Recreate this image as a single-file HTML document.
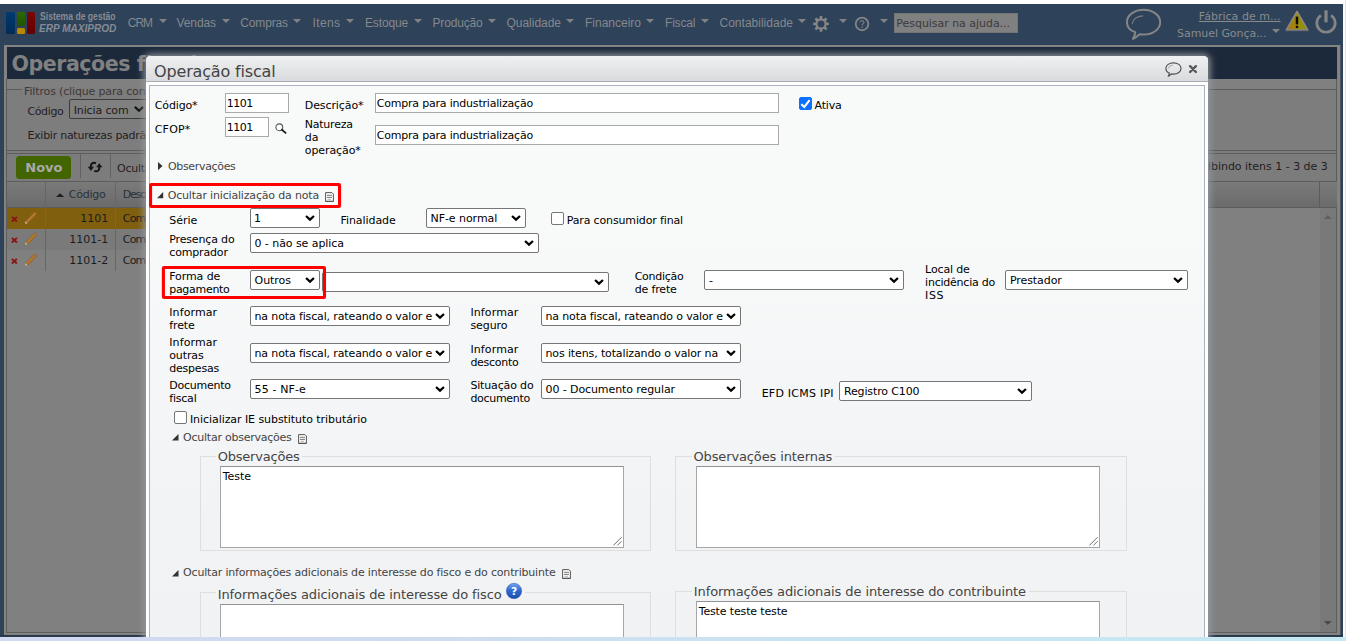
<!DOCTYPE html>
<html lang="pt-BR"><head><meta charset="utf-8"><title>Operações fiscais</title>
<style>

html,body{margin:0;padding:0}
body{width:1346px;height:641px;overflow:hidden;background:#fff;position:relative;font-family:"DejaVu Sans","Liberation Sans",sans-serif;font-size:11px}
.a,.t{position:absolute}
.t{white-space:nowrap}
div.a{box-sizing:border-box}
svg.a{overflow:visible}
.arr{position:absolute;width:0;height:0;border-left:4px solid transparent;border-right:4px solid transparent;border-top:4.5px solid #828282}
.sel{position:absolute;box-sizing:border-box;background:#fff;border:1px solid #767676;border-radius:2px}
.inp{position:absolute;box-sizing:border-box;background:#fff;border:1px solid #a9a9a9}
.ta{position:absolute;box-sizing:border-box;background:#fff;border:1px solid #a6a6a6;border-top-color:#929292}
.fs{position:absolute;box-sizing:border-box;border:1px solid #dddedf}
.cb{position:absolute;box-sizing:border-box;background:#fff;border:1px solid #767676;border-radius:2px}
.red{position:absolute;box-sizing:border-box;border:2.4px solid #fd0303}

</style></head>
<body>
<div class="a" style="left:0;top:4px;width:1343px;height:633px;background:#2e425a"></div>
<div class="a" style="left:1343px;top:0;width:3px;height:637px;background:#fbfbfb;border-left:0"></div>
<div class="a" style="left:1344.6px;top:0;width:1px;height:637px;background:#e4e4e4"></div>
<div class="a" style="left:6px;top:12px;width:8.5px;height:21.5px;border-radius:1.5px;background:linear-gradient(#003a70,#002c55)"></div>
<div class="a" style="left:16.5px;top:12px;width:8.5px;height:14px;border-radius:1.5px;background:linear-gradient(#2a6a00,#1f5400)"></div>
<div class="a" style="left:16.5px;top:27.6px;width:8.5px;height:6px;border-radius:1.5px;background:#b98a00"></div>
<div class="a" style="left:26.8px;top:12px;width:8.3px;height:21.5px;border-radius:1.5px;background:linear-gradient(#7c0505,#640000)"></div>
<span id="t0" class="t" style='left:39.70px;top:11px;font-size:10px;line-height:11px;color:#858b93;font-family:"Liberation Sans","DejaVu Sans",sans-serif;font-weight:700;transform-origin:0 50%;transform:scaleX(0.8609);'>Sistema de gestão</span>
<span id="t1" class="t" style='left:39.10px;top:23px;font-size:10.2px;line-height:11px;color:#858b93;font-family:"Liberation Sans","DejaVu Sans",sans-serif;font-weight:700;font-style:italic;transform-origin:0 50%;transform:scaleX(0.9883);'>ERP MAXIPROD</span>
<span id="t2" class="t" style='left:127.80px;top:16px;font-size:12px;line-height:14px;color:#85888c;font-family:"Liberation Sans","DejaVu Sans",sans-serif;letter-spacing:-1.043px;'>CRM</span>
<div class="arr" style="left:158.7px;top:19px"></div>
<span id="t3" class="t" style='left:176.50px;top:16px;font-size:12px;line-height:14px;color:#85888c;font-family:"Liberation Sans","DejaVu Sans",sans-serif;letter-spacing:-0.091px;'>Vendas</span>
<div class="arr" style="left:221.7px;top:19px"></div>
<span id="t4" class="t" style='left:240.20px;top:16px;font-size:12px;line-height:14px;color:#85888c;font-family:"Liberation Sans","DejaVu Sans",sans-serif;letter-spacing:-0.127px;'>Compras</span>
<div class="arr" style="left:293px;top:19px"></div>
<span id="t5" class="t" style='left:312.50px;top:16px;font-size:12px;line-height:14px;color:#85888c;font-family:"Liberation Sans","DejaVu Sans",sans-serif;letter-spacing:0.397px;'>Itens</span>
<div class="arr" style="left:346px;top:19px"></div>
<span id="t6" class="t" style='left:365.00px;top:16px;font-size:12px;line-height:14px;color:#85888c;font-family:"Liberation Sans","DejaVu Sans",sans-serif;letter-spacing:-0.150px;'>Estoque</span>
<div class="arr" style="left:413.7px;top:19px"></div>
<span id="t7" class="t" style='left:432.50px;top:16px;font-size:12px;line-height:14px;color:#85888c;font-family:"Liberation Sans","DejaVu Sans",sans-serif;letter-spacing:-0.172px;'>Produção</span>
<div class="arr" style="left:488px;top:19px"></div>
<span id="t8" class="t" style='left:506.50px;top:16px;font-size:12px;line-height:14px;color:#85888c;font-family:"Liberation Sans","DejaVu Sans",sans-serif;letter-spacing:-0.024px;'>Qualidade</span>
<div class="arr" style="left:566px;top:19px"></div>
<span id="t9" class="t" style='left:585.00px;top:16px;font-size:12px;line-height:14px;color:#85888c;font-family:"Liberation Sans","DejaVu Sans",sans-serif;'>Financeiro</span>
<div class="arr" style="left:646px;top:19px"></div>
<span id="t10" class="t" style='left:665.00px;top:16px;font-size:12px;line-height:14px;color:#85888c;font-family:"Liberation Sans","DejaVu Sans",sans-serif;letter-spacing:-0.191px;'>Fiscal</span>
<div class="arr" style="left:700.5px;top:19px"></div>
<span id="t11" class="t" style='left:719.50px;top:16px;font-size:12px;line-height:14px;color:#85888c;font-family:"Liberation Sans","DejaVu Sans",sans-serif;letter-spacing:0.008px;'>Contabilidade</span>
<div class="arr" style="left:798px;top:19px"></div>
<div class="arr" style="left:838.7px;top:19px"></div>
<div class="arr" style="left:880px;top:19px"></div>
<svg class="a" style="left:812px;top:15px" width="18" height="18" viewBox="0 0 18 18"><path d="M7.53 3.39 L7.80 0.99 L10.20 0.99 L10.47 3.39 L11.86 3.97 L13.75 2.46 L15.44 4.15 L13.93 6.04 L14.51 7.43 L16.91 7.70 L16.91 10.10 L14.51 10.37 L13.93 11.76 L15.44 13.65 L13.75 15.34 L11.86 13.83 L10.47 14.41 L10.20 16.81 L7.80 16.81 L7.53 14.41 L6.14 13.83 L4.25 15.34 L2.56 13.65 L4.07 11.76 L3.49 10.37 L1.09 10.10 L1.09 7.70 L3.49 7.43 L4.07 6.04 L2.56 4.15 L4.25 2.46 L6.14 3.97 Z" fill="#868686"/><circle cx="9" cy="8.9" r="3.5" fill="#2e425a"/></svg>
<svg class="a" style="left:854px;top:16px" width="16" height="16" viewBox="0 0 16 16"><circle cx="8.05" cy="7.95" r="6.3" fill="none" stroke="#848484" stroke-width="1.8"/><path d="M6.1 6.3 C6.1 4.2 10 4.2 10 6.3 C10 7.6 8.1 7.7 8.1 9.5" fill="none" stroke="#848484" stroke-width="1.1"/><circle cx="8.1" cy="11.3" r="0.75" fill="#848484"/></svg>
<svg class="a" style="left:1124px;top:6px" width="40" height="36" viewBox="0 0 40 36"><path d="M11.3 26.3 C5.5 24.3 2.9 20.5 2.9 16.2 C2.9 9.3 10.3 3.8 19.6 3.8 C28.9 3.8 36.2 9.3 36.2 16.2 C36.2 23 28.9 28.6 19.6 28.6 C18.2 28.6 16.9 28.5 15.6 28.2 C13.2 30.2 11 32 8.9 32.8 C10.2 30.9 11 28.7 11.3 26.3 Z" fill="none" stroke="#858585" stroke-width="2" stroke-linejoin="round"/><path d="M8.3 17.6 C8.6 13.3 13.2 10.2 18.6 9.9" fill="none" stroke="#7a7f86" stroke-width="1.1" stroke-linecap="round"/></svg>
<svg class="a" style="left:1284px;top:9px" width="27" height="24" viewBox="0 0 27 24"><defs><linearGradient id="wg" x1="0" x2="1" y1="0" y2="0"><stop offset="0.15" stop-color="#a97a12"/><stop offset="0.55" stop-color="#9d8d08"/><stop offset="1" stop-color="#8a900a"/></linearGradient></defs><path d="M13 2 L24.6 21.6 L1.6 21.6 Z" fill="#4a4f58" stroke="#4a4f58" stroke-width="1.6" stroke-linejoin="round"/><path d="M13 2.4 L23.7 20.8 L2.4 20.8 Z" fill="url(#wg)" stroke="#8c8c8c" stroke-width="1.3" stroke-linejoin="round"/><path d="M13 7.6 V15.4" stroke="#0a0a0a" stroke-width="2.5"/><rect x="11.8" y="16.8" width="2.4" height="2.3" fill="#0a0a0a"/></svg>
<svg class="a" style="left:1314px;top:9px" width="24" height="26" viewBox="0 0 24 26"><path d="M6.9 6.4 A9.2 9.2 0 1 0 17.1 6.4" fill="none" stroke="#858585" stroke-width="2.7"/><path d="M12 1.3 V13.4" stroke="#858585" stroke-width="3.2"/></svg>
<div class="a" style="left:893.8px;top:12.9px;width:124.3px;height:19.8px;background:#808080;border:1px solid #757575"></div>
<span id="t12" class="t" style='left:896.30px;top:17px;font-size:11px;line-height:13px;color:#3e3a3c;font-family:"DejaVu Sans","Liberation Sans",sans-serif;letter-spacing:-0.035px;'>Pesquisar na ajuda...</span>
<span id="t13" class="t" style='left:1198.80px;top:10px;font-size:11px;line-height:13px;color:#888a8c;font-family:"DejaVu Sans","Liberation Sans",sans-serif;letter-spacing:0.023px;text-decoration:underline;'>Fábrica de m...</span>
<span id="t14" class="t" style='left:1177.00px;top:27px;font-size:11px;line-height:13px;color:#888a8c;font-family:"DejaVu Sans","Liberation Sans",sans-serif;letter-spacing:-0.049px;'>Samuel Gonça...</span>
<div class="arr" style="left:1271.8px;top:28.8px"></div>
<div class="a" style="left:4px;top:44.5px;width:1336px;height:590.5px;background:#808080;border:2.5px solid #838383"></div>
<div class="a" style="left:1339.8px;top:44.5px;width:0.8px;height:591px;background:#4e5560"></div>
<div class="a" style="left:6.5px;top:47px;width:1330.5px;height:32px;background:#1c293a"></div>
<span id="t15" class="t" style='left:11.50px;top:52px;font-size:20.6px;line-height:24px;color:#808080;font-family:"DejaVu Sans","Liberation Sans",sans-serif;font-weight:700;letter-spacing:-0.495px;'>Operações</span>
<span id="t16" class="t" style='left:136.70px;top:52px;font-size:20.6px;line-height:24px;color:#808080;font-family:"DejaVu Sans","Liberation Sans",sans-serif;font-weight:700;letter-spacing:-0.165px;'>fiscais</span>
<div class="a" style="left:6px;top:79px;width:1331px;height:553.5px;border:1px solid #5e5e5e;border-top:0"></div>
<div class="a" style="left:0;top:635px;width:1343px;height:2px;background:linear-gradient(#26303c,#2e425a)"></div>
<div class="a" style="left:6px;top:89px;width:1331px;height:62px;border:1px solid #5b5b5b;background:#7d7d7d"></div>
<div class="a" style="left:22px;top:88px;width:130px;height:4px;background:#7e7e7e"></div>
<span id="t18" class="t" style='left:24.10px;top:85px;font-size:11px;line-height:13px;color:#3d3838;font-family:"DejaVu Sans","Liberation Sans",sans-serif;letter-spacing:-0.154px;'>Filtros (clique para con</span>
<span id="t19" class="t" style='left:145.30px;top:85px;font-size:11px;line-height:13px;color:#3d3838;font-family:"DejaVu Sans","Liberation Sans",sans-serif;'>figurar)</span>
<span id="t20" class="t" style='left:27.40px;top:105px;font-size:11px;line-height:13px;color:#241c22;font-family:"DejaVu Sans","Liberation Sans",sans-serif;letter-spacing:-0.345px;'>Código</span>
<div class="a" style="left:69px;top:99px;width:90px;height:20px;border:1px solid #3b3b3b;border-radius:2px;background:#808080"></div>
<span id="t21" class="t" style='left:73.70px;top:104px;font-size:11px;line-height:13px;color:#1e1a1a;font-family:"DejaVu Sans","Liberation Sans",sans-serif;letter-spacing:-0.131px;'>Inicia com</span>
<svg class="a" style="left:134.4px;top:106.4px" width="10" height="6.5" viewBox="0 0 10 6.5"><path d="M0.9 0.9 L5 4.7 L9.1 0.9" fill="none" stroke="#111" stroke-width="2.2"/></svg>
<span id="t22" class="t" style='left:27.40px;top:129px;font-size:11px;line-height:13px;color:#241c22;font-family:"DejaVu Sans","Liberation Sans",sans-serif;letter-spacing:-0.257px;'>Exibir naturezas padrã</span>
<span id="t23" class="t" style='left:146.10px;top:129px;font-size:11px;line-height:13px;color:#241c22;font-family:"DejaVu Sans","Liberation Sans",sans-serif;'>o</span>
<div class="a" style="left:7px;top:151px;width:1329px;height:2px;background:#7c7c7c"></div>
<div class="a" style="left:6px;top:153px;width:1331px;height:29px;border:1px solid #5d5d5d;background:#7c7c7c"></div>
<div class="a" style="left:16px;top:156px;width:55.2px;height:23.2px;border-radius:3.5px;background:#436501"></div>
<span id="t24" class="t" style='left:25.30px;top:160px;font-size:13px;line-height:15px;color:#a9a9a9;font-family:"DejaVu Sans","Liberation Sans",sans-serif;font-weight:700;letter-spacing:-0.030px;'>Novo</span>
<div class="a" style="left:80px;top:154px;width:1px;height:24px;background:#626262"></div>
<div class="a" style="left:110px;top:154px;width:1px;height:24px;background:#626262"></div>
<svg class="a" style="left:87px;top:161px" width="16" height="12" viewBox="87 161 16 12"><path d="M96 163.2 C92.6 162 90.9 163.9 90.9 166 V167.6" fill="none" stroke="#151515" stroke-width="2"/><path d="M87.8 166.8 H94 L90.9 170.9 Z" fill="#151515"/><path d="M94.2 170.9 C97.6 172.1 99.3 170.2 99.3 168 V166.6" fill="none" stroke="#151515" stroke-width="2"/><path d="M96.2 167.3 H102.4 L99.3 163.2 Z" fill="#151515"/></svg>
<span id="t25" class="t" style='left:117.10px;top:162px;font-size:11px;line-height:13px;color:#241c22;font-family:"DejaVu Sans","Liberation Sans",sans-serif;letter-spacing:-0.249px;'>Ocult</span>
<span id="t26" class="t" style='left:144.70px;top:162px;font-size:11px;line-height:13px;color:#241c22;font-family:"DejaVu Sans","Liberation Sans",sans-serif;'>ar filtros</span>
<span id="t27" class="t" style='left:1195.00px;top:160px;font-size:11px;line-height:13px;color:#241c1c;font-family:"DejaVu Sans","Liberation Sans",sans-serif;'>Ex</span>
<span id="t28" class="t" style='left:1207.90px;top:160px;font-size:11px;line-height:13px;color:#241c1c;font-family:"DejaVu Sans","Liberation Sans",sans-serif;letter-spacing:-0.018px;'>ibindo itens 1 - 3 de 3</span>
<div class="a" style="left:7px;top:182px;width:1329.5px;height:25.6px;background:linear-gradient(#7a7a7a,#6b6b6b);border-bottom:1px solid #5c5c5c"></div>
<div class="a" style="left:7px;top:207.6px;width:900px;height:21.2px;background:#80600f"></div>
<div class="a" style="left:7px;top:228.8px;width:900px;height:21.1px;background:#7a7a7a"></div>
<div class="a" style="left:1319.6px;top:207.6px;width:16.6px;height:424.3px;background:#797979"></div>
<div class="a" style="left:1319.3px;top:182px;width:1px;height:25.5px;background:#5c5c5c"></div>
<svg class="a" style="left:1323.8px;top:215px" width="7.6" height="4" viewBox="0 0 7.6 4"><path d="M0 4 L3.8 0 L7.6 4 Z" fill="#5f5f5f"/></svg>
<svg class="a" style="left:1323.8px;top:621px" width="7.6" height="4" viewBox="0 0 7.6 4"><path d="M0 0 L3.8 4 L7.6 0 Z" fill="#4a4a4a"/></svg>
<div class="a" style="left:45.2px;top:182px;width:1px;height:89.4px;background:#666"></div>
<div class="a" style="left:115.2px;top:182px;width:1px;height:89.4px;background:#666"></div>
<svg class="a" style="left:55.9px;top:192.9px" width="8.2" height="4.1" viewBox="0 0 8.2 3.8"><path d="M0 3.8 L4.1 0 L8.2 3.8 Z" fill="#1f1f1f"/></svg>
<span id="t29" class="t" style='left:68.70px;top:188px;font-size:11px;line-height:13px;color:#27313d;font-family:"DejaVu Sans","Liberation Sans",sans-serif;letter-spacing:-0.229px;'>Código</span>
<span id="t30" class="t" style='left:122.80px;top:188px;font-size:11px;line-height:13px;color:#27313d;font-family:"DejaVu Sans","Liberation Sans",sans-serif;letter-spacing:-1.283px;'>Desc</span>
<span id="t31" class="t" style='left:144.50px;top:188px;font-size:11px;line-height:13px;color:#27313d;font-family:"DejaVu Sans","Liberation Sans",sans-serif;'>rição</span>
<span id="t32" class="t" style='left:-0.50px;top:212px;font-size:11px;line-height:13px;color:#1c1c1c;font-family:"DejaVu Sans","Liberation Sans",sans-serif;left:auto;right:1237.7px;'>1101</span>
<span id="t33" class="t" style='left:122.80px;top:212px;font-size:11px;line-height:13px;color:#1c1c1c;font-family:"DejaVu Sans","Liberation Sans",sans-serif;letter-spacing:-0.814px;'>Com</span>
<span id="t34" class="t" style='left:145.50px;top:212px;font-size:11px;line-height:13px;color:#1c1c1c;font-family:"DejaVu Sans","Liberation Sans",sans-serif;'>pra para industrialização</span>
<svg class="a" style="left:10.5px;top:215.8px" width="6.8" height="6.4" viewBox="0 0 6.8 6.4"><path d="M0.9 0.9 L5.9 5.5 M5.9 0.9 L0.9 5.5" stroke="#8a1414" stroke-width="1.9"/></svg>
<svg class="a" style="left:23.6px;top:211.0px" width="13.6" height="13.2" viewBox="0 0 13.6 13.2"><path d="M1.6 10.2 L10.6 0.8 L12.9 3 L3.8 12.3 Z" fill="#a86f2c" stroke="#8a5a22" stroke-width="0.5"/><path d="M1.6 10.2 L3.8 12.3 L0.4 13 Z" fill="#c9b48a"/><path d="M0.4 13 L1.3 12.8 L0.7 12.2 Z" fill="#222"/><path d="M3 10.6 L11.4 2" stroke="#c48a3f" stroke-width="0.8"/></svg>
<span id="t35" class="t" style='left:-0.50px;top:233px;font-size:11px;line-height:13px;color:#1c1c1c;font-family:"DejaVu Sans","Liberation Sans",sans-serif;left:auto;right:1237.7px;'>1101-1</span>
<span id="t36" class="t" style='left:122.80px;top:233px;font-size:11px;line-height:13px;color:#1c1c1c;font-family:"DejaVu Sans","Liberation Sans",sans-serif;letter-spacing:-0.814px;'>Com</span>
<span id="t37" class="t" style='left:145.50px;top:233px;font-size:11px;line-height:13px;color:#1c1c1c;font-family:"DejaVu Sans","Liberation Sans",sans-serif;'>pra para industrialização</span>
<svg class="a" style="left:10.5px;top:237.0px" width="6.8" height="6.4" viewBox="0 0 6.8 6.4"><path d="M0.9 0.9 L5.9 5.5 M5.9 0.9 L0.9 5.5" stroke="#8a1414" stroke-width="1.9"/></svg>
<svg class="a" style="left:23.6px;top:232.2px" width="13.6" height="13.2" viewBox="0 0 13.6 13.2"><path d="M1.6 10.2 L10.6 0.8 L12.9 3 L3.8 12.3 Z" fill="#a86f2c" stroke="#8a5a22" stroke-width="0.5"/><path d="M1.6 10.2 L3.8 12.3 L0.4 13 Z" fill="#c9b48a"/><path d="M0.4 13 L1.3 12.8 L0.7 12.2 Z" fill="#222"/><path d="M3 10.6 L11.4 2" stroke="#c48a3f" stroke-width="0.8"/></svg>
<span id="t38" class="t" style='left:-0.50px;top:254px;font-size:11px;line-height:13px;color:#1c1c1c;font-family:"DejaVu Sans","Liberation Sans",sans-serif;left:auto;right:1237.7px;'>1101-2</span>
<span id="t39" class="t" style='left:122.80px;top:254px;font-size:11px;line-height:13px;color:#1c1c1c;font-family:"DejaVu Sans","Liberation Sans",sans-serif;letter-spacing:-0.814px;'>Com</span>
<span id="t40" class="t" style='left:145.50px;top:254px;font-size:11px;line-height:13px;color:#1c1c1c;font-family:"DejaVu Sans","Liberation Sans",sans-serif;'>pra para industrialização</span>
<svg class="a" style="left:10.5px;top:258.2px" width="6.8" height="6.4" viewBox="0 0 6.8 6.4"><path d="M0.9 0.9 L5.9 5.5 M5.9 0.9 L0.9 5.5" stroke="#8a1414" stroke-width="1.9"/></svg>
<svg class="a" style="left:23.6px;top:253.4px" width="13.6" height="13.2" viewBox="0 0 13.6 13.2"><path d="M1.6 10.2 L10.6 0.8 L12.9 3 L3.8 12.3 Z" fill="#a86f2c" stroke="#8a5a22" stroke-width="0.5"/><path d="M1.6 10.2 L3.8 12.3 L0.4 13 Z" fill="#c9b48a"/><path d="M0.4 13 L1.3 12.8 L0.7 12.2 Z" fill="#222"/><path d="M3 10.6 L11.4 2" stroke="#c48a3f" stroke-width="0.8"/></svg>
<div class="a" style="left:146px;top:56px;width:1062px;height:600px;background:#fff;border-radius:4.5px 4.5px 0 0;box-shadow:0 0 7px 2px rgba(150,155,160,.95)"></div>
<div class="a" style="left:146px;top:56px;width:1062px;height:25.6px;border-radius:4.5px 4.5px 0 0;background:linear-gradient(#eff0f1,#d9dbde);border-bottom:1px solid #a9aeb6"></div>
<span id="t17" class="t" style='left:154.10px;top:62px;font-size:16px;line-height:19px;color:#444;font-family:"DejaVu Sans","Liberation Sans",sans-serif;letter-spacing:-0.168px;'>Operação fiscal</span>
<div class="a" style="left:149px;top:85px;width:1056px;height:600px;border:1px solid #a9b2bf;background:linear-gradient(#f8fafa 0,#f8fafa 130px,#f2f3f5 420px,#f1f2f4 600px)"></div>
<svg class="a" style="left:1163.6px;top:60.6px" width="19" height="17" viewBox="0 0 19 17"><path d="M5.4 12.1 C2.9 11.1 1.9 9.3 1.9 7.4 C1.9 4.2 5.3 1.8 9.5 1.8 C13.7 1.8 17 4.2 17 7.4 C17 10.6 13.7 13.1 9.5 13.1 C8.8 13.1 8.1 13 7.4 12.9 C6.3 14 5.3 14.9 4.2 15.3 C4.9 14.3 5.3 13.2 5.4 12.1 Z" fill="none" stroke="#505050" stroke-width="1.15" stroke-linejoin="round"/><path d="M4.3 7.5 C4.5 5.6 6.6 4.4 8.8 4.2" fill="none" stroke="#8a8a8a" stroke-width="0.7"/></svg>
<svg class="a" style="left:1188px;top:64px" width="10" height="10" viewBox="0 0 10 10"><path d="M2.1 2.2 L7.9 8 M7.9 2.2 L2.1 8" stroke="#585858" stroke-width="2.4" stroke-linecap="round"/></svg>
<span id="t41" class="t" style='left:154.75px;top:99px;font-size:11px;line-height:13px;color:#000;font-family:"DejaVu Sans","Liberation Sans",sans-serif;letter-spacing:-0.132px;'>Código*</span>
<div class="inp" style="left:225px;top:93px;width:64px;height:20px"></div>
<span id="t42" class="t" style='left:226.70px;top:97px;font-size:11px;line-height:13px;color:#000;font-family:"DejaVu Sans","Liberation Sans",sans-serif;letter-spacing:-0.475px;'>1101</span>
<span id="t43" class="t" style='left:304.75px;top:99px;font-size:11px;line-height:13px;color:#000;font-family:"DejaVu Sans","Liberation Sans",sans-serif;letter-spacing:-0.087px;'>Descrição*</span>
<div class="inp" style="left:375px;top:93px;width:404px;height:20px"></div>
<span id="t44" class="t" style='left:376.70px;top:97px;font-size:11px;line-height:13px;color:#000;font-family:"DejaVu Sans","Liberation Sans",sans-serif;letter-spacing:-0.198px;'>Compra para industrialização</span>
<div class="cb" style="left:799px;top:97px;width:13px;height:13px;background:#0b70fd;border-color:#0b70fd"></div><svg class="a" style="left:799px;top:97px" width="13" height="13" viewBox="0 0 13 13"><path d="M2.3 7.3 L5.3 10 L10.6 3.2" fill="none" stroke="#fff" stroke-width="2.1"/></svg>
<span id="t45" class="t" style='left:814.50px;top:99px;font-size:11px;line-height:13px;color:#000;font-family:"DejaVu Sans","Liberation Sans",sans-serif;letter-spacing:-0.191px;'>Ativa</span>
<span id="t46" class="t" style='left:154.75px;top:123px;font-size:11px;line-height:13px;color:#000;font-family:"DejaVu Sans","Liberation Sans",sans-serif;letter-spacing:0.188px;'>CFOP*</span>
<div class="inp" style="left:225px;top:117px;width:44px;height:20px"></div>
<span id="t47" class="t" style='left:226.70px;top:121px;font-size:11px;line-height:13px;color:#000;font-family:"DejaVu Sans","Liberation Sans",sans-serif;letter-spacing:-0.475px;'>1101</span>
<svg class="a" style="left:274.5px;top:122.5px" width="12" height="11" viewBox="0 0 12 11"><circle cx="4.3" cy="4.3" r="3.4" fill="#fff" stroke="#555" stroke-width="1.1"/><path d="M6.9 6.7 L10.6 9.9" stroke="#222" stroke-width="1.9" stroke-linecap="round"/></svg>
<span id="t48" class="t" style='left:304.75px;top:118px;font-size:11px;line-height:13px;color:#000;font-family:"DejaVu Sans","Liberation Sans",sans-serif;letter-spacing:-0.229px;'>Natureza</span>
<span id="t49" class="t" style='left:304.75px;top:131px;font-size:11px;line-height:13px;color:#000;font-family:"DejaVu Sans","Liberation Sans",sans-serif;'>da</span>
<span id="t50" class="t" style='left:304.75px;top:144px;font-size:11px;line-height:13px;color:#000;font-family:"DejaVu Sans","Liberation Sans",sans-serif;letter-spacing:-0.085px;'>operação*</span>
<div class="inp" style="left:375px;top:125px;width:404px;height:20px"></div>
<span id="t51" class="t" style='left:376.70px;top:129px;font-size:11px;line-height:13px;color:#000;font-family:"DejaVu Sans","Liberation Sans",sans-serif;letter-spacing:-0.198px;'>Compra para industrialização</span>
<svg class="a" style="left:158px;top:161.9px" width="4.5" height="8.2" viewBox="0 0 4.5 8.2"><path d="M0 0 L4.5 4.1 L0 8.2 Z" fill="#333"/></svg>
<span id="t52" class="t" style='left:168.00px;top:160px;font-size:11px;line-height:13px;color:#444;font-family:"DejaVu Sans","Liberation Sans",sans-serif;letter-spacing:-0.337px;'>Observações</span>
<svg class="a" style="left:157px;top:192px" width="6.2" height="6.2" viewBox="0 0 6 6"><path d="M6 0 L6 6 L0 6 Z" fill="#333"/></svg>
<span id="t53" class="t" style='left:167.70px;top:189px;font-size:11px;line-height:13px;color:#444;font-family:"DejaVu Sans","Liberation Sans",sans-serif;letter-spacing:-0.174px;'>Ocultar inicialização da nota</span>
<svg class="a" style="left:325px;top:192px" width="9" height="10" viewBox="0 0 9 10"><path d="M0.6 0.6 H6.9 L8.4 2.1 V9.3 H0.6 Z" fill="#fbfbfb" stroke="#555" stroke-width="1"/><path d="M0.4 9.4 H8.6" stroke="#444" stroke-width="0.7"/><path d="M2 3.3 H7" stroke="#6a6a6a" stroke-width="0.9"/><path d="M2 5.4 H7" stroke="#6a6a6a" stroke-width="0.9"/><path d="M2.6 7.3 H6" stroke="#a5a5a5" stroke-width="0.8"/></svg>
<span id="t54" class="t" style='left:169.25px;top:214px;font-size:11px;line-height:13px;color:#000;font-family:"DejaVu Sans","Liberation Sans",sans-serif;letter-spacing:-0.022px;'>Série</span>
<div class="sel" style="left:250px;top:208px;width:70px;height:20px"><svg class="a" style="right:0;top:0" width="20" height="18" viewBox="0 0 20 18"><path d="M7.04 7.04 L11 10.64 L14.96 7.04" fill="none" stroke="#000" stroke-width="2.25"/></svg></div>
<span id="t55" class="t" style='left:253.90px;top:212px;font-size:11px;line-height:13px;color:#000;font-family:"DejaVu Sans","Liberation Sans",sans-serif;'>1</span>
<span id="t56" class="t" style='left:340.50px;top:214px;font-size:11px;line-height:13px;color:#000;font-family:"DejaVu Sans","Liberation Sans",sans-serif;letter-spacing:-0.064px;'>Finalidade</span>
<div class="sel" style="left:426px;top:208px;width:100px;height:20px"><svg class="a" style="right:0;top:0" width="20" height="18" viewBox="0 0 20 18"><path d="M7.04 7.04 L11 10.64 L14.96 7.04" fill="none" stroke="#000" stroke-width="2.25"/></svg></div>
<span id="t57" class="t" style='left:430.50px;top:212px;font-size:11px;line-height:13px;color:#000;font-family:"DejaVu Sans","Liberation Sans",sans-serif;letter-spacing:-0.054px;'>NF-e normal</span>
<div class="cb" style="left:551px;top:212px;width:13px;height:13px"></div>
<span id="t58" class="t" style='left:566.70px;top:214px;font-size:11px;line-height:13px;color:#000;font-family:"DejaVu Sans","Liberation Sans",sans-serif;letter-spacing:-0.143px;'>Para consumidor final</span>
<span id="t59" class="t" style='left:169.25px;top:233px;font-size:11px;line-height:13px;color:#000;font-family:"DejaVu Sans","Liberation Sans",sans-serif;letter-spacing:-0.156px;'>Presença do</span>
<span id="t60" class="t" style='left:169.25px;top:246px;font-size:11px;line-height:13px;color:#000;font-family:"DejaVu Sans","Liberation Sans",sans-serif;letter-spacing:-0.165px;'>comprador</span>
<div class="sel" style="left:250px;top:233px;width:289px;height:20px"><svg class="a" style="right:0;top:0" width="20" height="18" viewBox="0 0 20 18"><path d="M7.04 7.04 L11 10.64 L14.96 7.04" fill="none" stroke="#000" stroke-width="2.25"/></svg></div>
<span id="t61" class="t" style='left:254.50px;top:237px;font-size:11px;line-height:13px;color:#000;font-family:"DejaVu Sans","Liberation Sans",sans-serif;letter-spacing:-0.061px;'>0 - não se aplica</span>
<span id="t62" class="t" style='left:169.25px;top:270px;font-size:11px;line-height:13px;color:#000;font-family:"DejaVu Sans","Liberation Sans",sans-serif;letter-spacing:-0.088px;'>Forma de</span>
<span id="t63" class="t" style='left:169.25px;top:283px;font-size:11px;line-height:13px;color:#000;font-family:"DejaVu Sans","Liberation Sans",sans-serif;letter-spacing:-0.300px;'>pagamento</span>
<div class="sel" style="left:322px;top:272px;width:287px;height:20px"><svg class="a" style="right:0;top:0" width="20" height="18" viewBox="0 0 20 18"><path d="M7.04 7.04 L11 10.64 L14.96 7.04" fill="none" stroke="#000" stroke-width="2.25"/></svg></div>
<div class="sel" style="left:250px;top:270px;width:70px;height:20px"><svg class="a" style="right:0;top:0" width="20" height="18" viewBox="0 0 20 18"><path d="M7.04 7.04 L11 10.64 L14.96 7.04" fill="none" stroke="#000" stroke-width="2.25"/></svg></div>
<span id="t64" class="t" style='left:254.50px;top:274px;font-size:11px;line-height:13px;color:#000;font-family:"DejaVu Sans","Liberation Sans",sans-serif;letter-spacing:-0.031px;'>Outros</span>
<span id="t65" class="t" style='left:634.70px;top:270px;font-size:11px;line-height:13px;color:#000;font-family:"DejaVu Sans","Liberation Sans",sans-serif;letter-spacing:-0.269px;'>Condição</span>
<span id="t66" class="t" style='left:634.70px;top:283px;font-size:11px;line-height:13px;color:#000;font-family:"DejaVu Sans","Liberation Sans",sans-serif;letter-spacing:-0.150px;'>de frete</span>
<div class="sel" style="left:704px;top:270px;width:200px;height:20px"><svg class="a" style="right:0;top:0" width="20" height="18" viewBox="0 0 20 18"><path d="M7.04 7.04 L11 10.64 L14.96 7.04" fill="none" stroke="#000" stroke-width="2.25"/></svg></div>
<span id="t67" class="t" style='left:708.90px;top:274px;font-size:11px;line-height:13px;color:#000;font-family:"DejaVu Sans","Liberation Sans",sans-serif;'>-</span>
<span id="t68" class="t" style='left:925.10px;top:263px;font-size:11px;line-height:13px;color:#000;font-family:"DejaVu Sans","Liberation Sans",sans-serif;letter-spacing:-0.139px;'>Local de</span>
<span id="t69" class="t" style='left:925.10px;top:276px;font-size:11px;line-height:13px;color:#000;font-family:"DejaVu Sans","Liberation Sans",sans-serif;letter-spacing:-0.232px;'>incidência do</span>
<span id="t70" class="t" style='left:925.10px;top:289px;font-size:11px;line-height:13px;color:#000;font-family:"DejaVu Sans","Liberation Sans",sans-serif;letter-spacing:0.644px;'>ISS</span>
<div class="sel" style="left:1005px;top:270px;width:183px;height:20px"><svg class="a" style="right:0;top:0" width="20" height="18" viewBox="0 0 20 18"><path d="M7.04 7.04 L11 10.64 L14.96 7.04" fill="none" stroke="#000" stroke-width="2.25"/></svg></div>
<span id="t71" class="t" style='left:1009.90px;top:274px;font-size:11px;line-height:13px;color:#000;font-family:"DejaVu Sans","Liberation Sans",sans-serif;letter-spacing:-0.074px;'>Prestador</span>
<span id="t72" class="t" style='left:169.25px;top:306px;font-size:11px;line-height:13px;color:#000;font-family:"DejaVu Sans","Liberation Sans",sans-serif;letter-spacing:0.107px;'>Informar</span>
<span id="t73" class="t" style='left:169.25px;top:319px;font-size:11px;line-height:13px;color:#000;font-family:"DejaVu Sans","Liberation Sans",sans-serif;letter-spacing:-0.113px;'>frete</span>
<div class="sel" style="left:250px;top:306px;width:200px;height:20px"><svg class="a" style="right:0;top:0" width="20" height="18" viewBox="0 0 20 18"><path d="M7.04 7.04 L11 10.64 L14.96 7.04" fill="none" stroke="#000" stroke-width="2.25"/></svg></div>
<span id="t74" class="t" style='left:254.50px;top:310px;font-size:11px;line-height:13px;color:#000;font-family:"DejaVu Sans","Liberation Sans",sans-serif;letter-spacing:-0.133px;'>na nota fiscal, rateando o valor e</span>
<span id="t75" class="t" style='left:470.40px;top:306px;font-size:11px;line-height:13px;color:#000;font-family:"DejaVu Sans","Liberation Sans",sans-serif;letter-spacing:0.120px;'>Informar</span>
<span id="t76" class="t" style='left:470.40px;top:319px;font-size:11px;line-height:13px;color:#000;font-family:"DejaVu Sans","Liberation Sans",sans-serif;letter-spacing:-0.061px;'>seguro</span>
<div class="sel" style="left:541px;top:306px;width:200px;height:20px"><svg class="a" style="right:0;top:0" width="20" height="18" viewBox="0 0 20 18"><path d="M7.04 7.04 L11 10.64 L14.96 7.04" fill="none" stroke="#000" stroke-width="2.25"/></svg></div>
<span id="t77" class="t" style='left:545.50px;top:310px;font-size:11px;line-height:13px;color:#000;font-family:"DejaVu Sans","Liberation Sans",sans-serif;letter-spacing:-0.141px;'>na nota fiscal, rateando o valor e</span>
<span id="t78" class="t" style='left:169.25px;top:336px;font-size:11px;line-height:13px;color:#000;font-family:"DejaVu Sans","Liberation Sans",sans-serif;letter-spacing:0.107px;'>Informar</span>
<span id="t79" class="t" style='left:169.25px;top:349px;font-size:11px;line-height:13px;color:#000;font-family:"DejaVu Sans","Liberation Sans",sans-serif;letter-spacing:-0.128px;'>outras</span>
<span id="t80" class="t" style='left:169.25px;top:362px;font-size:11px;line-height:13px;color:#000;font-family:"DejaVu Sans","Liberation Sans",sans-serif;letter-spacing:-0.211px;'>despesas</span>
<div class="sel" style="left:250px;top:343px;width:200px;height:20px"><svg class="a" style="right:0;top:0" width="20" height="18" viewBox="0 0 20 18"><path d="M7.04 7.04 L11 10.64 L14.96 7.04" fill="none" stroke="#000" stroke-width="2.25"/></svg></div>
<span id="t81" class="t" style='left:254.50px;top:347px;font-size:11px;line-height:13px;color:#000;font-family:"DejaVu Sans","Liberation Sans",sans-serif;letter-spacing:-0.133px;'>na nota fiscal, rateando o valor e</span>
<span id="t82" class="t" style='left:470.40px;top:343px;font-size:11px;line-height:13px;color:#000;font-family:"DejaVu Sans","Liberation Sans",sans-serif;letter-spacing:0.120px;'>Informar</span>
<span id="t83" class="t" style='left:470.40px;top:356px;font-size:11px;line-height:13px;color:#000;font-family:"DejaVu Sans","Liberation Sans",sans-serif;letter-spacing:-0.273px;'>desconto</span>
<div class="sel" style="left:541px;top:343px;width:200px;height:20px"><svg class="a" style="right:0;top:0" width="20" height="18" viewBox="0 0 20 18"><path d="M7.04 7.04 L11 10.64 L14.96 7.04" fill="none" stroke="#000" stroke-width="2.25"/></svg></div>
<span id="t84" class="t" style='left:545.50px;top:347px;font-size:11px;line-height:13px;color:#000;font-family:"DejaVu Sans","Liberation Sans",sans-serif;letter-spacing:-0.126px;'>nos itens, totalizando o valor na</span>
<span id="t85" class="t" style='left:169.25px;top:379px;font-size:11px;line-height:13px;color:#000;font-family:"DejaVu Sans","Liberation Sans",sans-serif;letter-spacing:-0.247px;'>Documento</span>
<span id="t86" class="t" style='left:169.25px;top:392px;font-size:11px;line-height:13px;color:#000;font-family:"DejaVu Sans","Liberation Sans",sans-serif;letter-spacing:-0.211px;'>fiscal</span>
<div class="sel" style="left:250px;top:379px;width:200px;height:20px"><svg class="a" style="right:0;top:0" width="20" height="18" viewBox="0 0 20 18"><path d="M7.04 7.04 L11 10.64 L14.96 7.04" fill="none" stroke="#000" stroke-width="2.25"/></svg></div>
<span id="t87" class="t" style='left:254.50px;top:383px;font-size:11px;line-height:13px;color:#000;font-family:"DejaVu Sans","Liberation Sans",sans-serif;letter-spacing:0.137px;'>55 - NF-e</span>
<span id="t88" class="t" style='left:470.40px;top:379px;font-size:11px;line-height:13px;color:#000;font-family:"DejaVu Sans","Liberation Sans",sans-serif;letter-spacing:-0.154px;'>Situação do</span>
<span id="t89" class="t" style='left:470.40px;top:392px;font-size:11px;line-height:13px;color:#000;font-family:"DejaVu Sans","Liberation Sans",sans-serif;letter-spacing:-0.293px;'>documento</span>
<div class="sel" style="left:541px;top:379px;width:200px;height:20px"><svg class="a" style="right:0;top:0" width="20" height="18" viewBox="0 0 20 18"><path d="M7.04 7.04 L11 10.64 L14.96 7.04" fill="none" stroke="#000" stroke-width="2.25"/></svg></div>
<span id="t90" class="t" style='left:545.50px;top:383px;font-size:11px;line-height:13px;color:#000;font-family:"DejaVu Sans","Liberation Sans",sans-serif;letter-spacing:-0.091px;'>00 - Documento regular</span>
<span id="t91" class="t" style='left:761.70px;top:387px;font-size:11px;line-height:13px;color:#000;font-family:"DejaVu Sans","Liberation Sans",sans-serif;letter-spacing:0.232px;'>EFD ICMS IPI</span>
<div class="sel" style="left:839px;top:381px;width:193px;height:20px"><svg class="a" style="right:0;top:0" width="20" height="18" viewBox="0 0 20 18"><path d="M7.04 7.04 L11 10.64 L14.96 7.04" fill="none" stroke="#000" stroke-width="2.25"/></svg></div>
<span id="t92" class="t" style='left:843.90px;top:385px;font-size:11px;line-height:13px;color:#000;font-family:"DejaVu Sans","Liberation Sans",sans-serif;letter-spacing:-0.122px;'>Registro C100</span>
<div class="cb" style="left:174px;top:411px;width:13px;height:13px"></div>
<span id="t93" class="t" style='left:189.90px;top:413px;font-size:11px;line-height:13px;color:#000;font-family:"DejaVu Sans","Liberation Sans",sans-serif;letter-spacing:-0.061px;'>Inicializar IE substituto tributário</span>
<svg class="a" style="left:172px;top:434.2px" width="6.5" height="6.5" viewBox="0 0 6 6"><path d="M6 0 L6 6 L0 6 Z" fill="#333"/></svg>
<span id="t94" class="t" style='left:183.10px;top:431px;font-size:11px;line-height:13px;color:#444;font-family:"DejaVu Sans","Liberation Sans",sans-serif;letter-spacing:-0.246px;'>Ocultar observações</span>
<svg class="a" style="left:298.3px;top:434.4px" width="9" height="10" viewBox="0 0 9 10"><path d="M0.6 0.6 H6.9 L8.4 2.1 V9.3 H0.6 Z" fill="#fbfbfb" stroke="#555" stroke-width="1"/><path d="M0.4 9.4 H8.6" stroke="#444" stroke-width="0.7"/><path d="M2 3.3 H7" stroke="#6a6a6a" stroke-width="0.9"/><path d="M2 5.4 H7" stroke="#6a6a6a" stroke-width="0.9"/><path d="M2.6 7.3 H6" stroke="#a5a5a5" stroke-width="0.8"/></svg>
<div class="fs" style="left:200px;top:456px;width:451px;height:95px"></div>
<div class="a" style="left:216px;top:455px;width:85.5px;height:3px;background:#f3f4f6"></div>
<span id="t95" class="t" style='left:217.70px;top:449px;font-size:13px;line-height:15px;color:#444;font-family:"DejaVu Sans","Liberation Sans",sans-serif;letter-spacing:-0.213px;'>Observações</span>
<div class="ta" style="left:220px;top:466px;width:404px;height:82px"><svg class="a" style="right:0;bottom:0" width="12" height="12" viewBox="0 0 12 12"><path d="M10.6 2.2 L2.4 10.4 M10.6 6.2 L6.4 10.4" stroke="#5f5f5f" stroke-width="0.9"/></svg></div>
<span id="t96" class="t" style='left:222.70px;top:470px;font-size:11px;line-height:13px;color:#000;font-family:"DejaVu Sans","Liberation Sans",sans-serif;letter-spacing:-0.027px;'>Teste</span>
<div class="fs" style="left:675px;top:456px;width:452px;height:95px"></div>
<div class="a" style="left:691.5px;top:455px;width:143.0px;height:3px;background:#f3f4f6"></div>
<span id="t97" class="t" style='left:693.40px;top:449px;font-size:13px;line-height:15px;color:#444;font-family:"DejaVu Sans","Liberation Sans",sans-serif;letter-spacing:-0.123px;'>Observações internas</span>
<div class="ta" style="left:696px;top:466px;width:404px;height:82px"><svg class="a" style="right:0;bottom:0" width="12" height="12" viewBox="0 0 12 12"><path d="M10.6 2.2 L2.4 10.4 M10.6 6.2 L6.4 10.4" stroke="#5f5f5f" stroke-width="0.9"/></svg></div>
<svg class="a" style="left:172px;top:569.6px" width="6.5" height="6.5" viewBox="0 0 6 6"><path d="M6 0 L6 6 L0 6 Z" fill="#333"/></svg>
<span id="t98" class="t" style='left:183.10px;top:566px;font-size:11px;line-height:13px;color:#444;font-family:"DejaVu Sans","Liberation Sans",sans-serif;letter-spacing:-0.181px;'>Ocultar informações adicionais de interesse do fisco e do contribuinte</span>
<svg class="a" style="left:562px;top:568.7px" width="9" height="10" viewBox="0 0 9 10"><path d="M0.6 0.6 H6.9 L8.4 2.1 V9.3 H0.6 Z" fill="#fbfbfb" stroke="#555" stroke-width="1"/><path d="M0.4 9.4 H8.6" stroke="#444" stroke-width="0.7"/><path d="M2 3.3 H7" stroke="#6a6a6a" stroke-width="0.9"/><path d="M2 5.4 H7" stroke="#6a6a6a" stroke-width="0.9"/><path d="M2.6 7.3 H6" stroke="#a5a5a5" stroke-width="0.8"/></svg>
<div class="fs" style="left:200px;top:592px;width:451px;height:108px"></div>
<div class="a" style="left:216px;top:591px;width:309px;height:3px;background:#f3f4f6"></div>
<span id="t99" class="t" style='left:217.70px;top:587px;font-size:13px;line-height:15px;color:#444;font-family:"DejaVu Sans","Liberation Sans",sans-serif;letter-spacing:-0.092px;'>Informações adicionais de interesse do fisco</span>
<svg class="a" style="left:506.2px;top:583.2px" width="16" height="16" viewBox="0 0 16 16"><defs><linearGradient id="hg" x1="0" y1="0" x2="0" y2="1"><stop offset="0" stop-color="#74a6ee"/><stop offset="0.45" stop-color="#2f6bd2"/><stop offset="1" stop-color="#1b4dab"/></linearGradient></defs><circle cx="8" cy="8" r="7.7" fill="url(#hg)" stroke="#2a58a8" stroke-width="0.5"/><text x="8.1" y="12" text-anchor="middle" font-family="DejaVu Sans,Liberation Sans,sans-serif" font-weight="700" font-size="10.8" fill="#fff">?</text></svg>
<div class="ta" style="left:220px;top:604px;width:404px;height:96px"></div>
<div class="fs" style="left:675px;top:591px;width:452px;height:109px"></div>
<div class="a" style="left:691.5px;top:590px;width:337.0px;height:3px;background:#f3f4f6"></div>
<span id="t100" class="t" style='left:693.80px;top:584px;font-size:13px;line-height:15px;color:#444;font-family:"DejaVu Sans","Liberation Sans",sans-serif;letter-spacing:-0.091px;'>Informações adicionais de interesse do contribuinte</span>
<div class="ta" style="left:696px;top:601px;width:404px;height:99px"></div>
<span id="t101" class="t" style='left:698.70px;top:605px;font-size:11px;line-height:13px;color:#000;font-family:"DejaVu Sans","Liberation Sans",sans-serif;letter-spacing:-0.142px;'>Teste teste teste</span>
<svg class="a" style="left:0;top:0" width="1346" height="641" viewBox="0 0 1346 641"><rect x="150.55" y="184.5" width="189" height="22" rx="0.7" fill="none" stroke="#fe0000" stroke-width="3.1"/><rect x="163.4" y="267.5" width="161.1" height="30" rx="0.7" fill="none" stroke="#fe0000" stroke-width="3.1"/></svg>
<div class="a" style="left:0;top:637px;width:1346px;height:4px;background:linear-gradient(90deg,#d2d8f0 0,#cfdcf0 30%,#c8e6f2 70%,#c6e8f3 100%)"></div>
</body></html>
